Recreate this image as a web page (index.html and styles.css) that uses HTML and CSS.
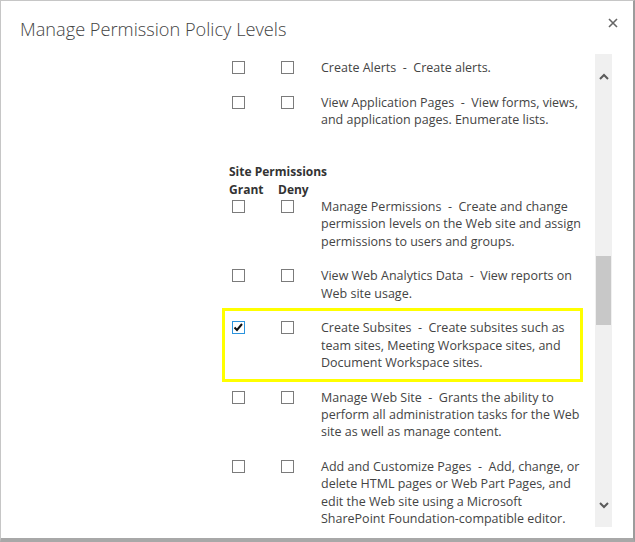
FILE: index.html
```
<!DOCTYPE html>
<html>
<head>
<meta charset="utf-8">
<link rel="stylesheet" href="styles.css">
</head>
<body>
<div class="dialog">
  <div class="header">
    <div class="title">Manage Permission Policy Levels</div>
    <button class="close" aria-label="Close">
      <svg width="10" height="10" viewBox="0 0 10 10"><path d="M1 1 L9 9 M9 1 L1 9" stroke="#666" stroke-width="1.6" fill="none"/></svg>
    </button>
  </div>
  <div class="body">
    <div class="content">
      <div class="row">
        <span class="cell"><span class="cb"></span></span>
        <span class="cell"><span class="cb"></span></span>
        <span class="desc">Create Alerts&nbsp; -&nbsp; Create alerts.</span>
      </div>
      <div class="row">
        <span class="cell"><span class="cb"></span></span>
        <span class="cell"><span class="cb"></span></span>
        <span class="desc">View Application Pages&nbsp; -&nbsp; View forms, views,<br>and application pages. Enumerate lists.</span>
      </div>
      <div class="section-head">
        <div class="section-title">Site Permissions</div>
        <div class="col-heads"><span class="cell">Grant</span><span class="cell">Deny</span></div>
      </div>
      <div class="row">
        <span class="cell"><span class="cb"></span></span>
        <span class="cell"><span class="cb"></span></span>
        <span class="desc">Manage Permissions&nbsp; -&nbsp; Create and change<br>permission levels on the Web site and assign<br>permissions to users and groups.</span>
      </div>
      <div class="row">
        <span class="cell"><span class="cb"></span></span>
        <span class="cell"><span class="cb"></span></span>
        <span class="desc">View Web Analytics Data&nbsp; -&nbsp; View reports on<br>Web site usage.</span>
      </div>
      <div class="row highlight">
        <span class="cell"><span class="cb checked"><svg width="13" height="13" viewBox="0 0 13 13"><path d="M2.5 6.5 L5 9 L10 3" stroke="#111" stroke-width="2" fill="none"/></svg></span></span>
        <span class="cell"><span class="cb"></span></span>
        <span class="desc">Create Subsites&nbsp; -&nbsp; Create subsites such as<br>team sites, Meeting Workspace sites, and<br>Document Workspace sites.</span>
      </div>
      <div class="row">
        <span class="cell"><span class="cb"></span></span>
        <span class="cell"><span class="cb"></span></span>
        <span class="desc">Manage Web Site&nbsp; -&nbsp; Grants the ability to<br>perform all administration tasks for the Web<br>site as well as manage content.</span>
      </div>
      <div class="row">
        <span class="cell"><span class="cb"></span></span>
        <span class="cell"><span class="cb"></span></span>
        <span class="desc">Add and Customize Pages&nbsp; -&nbsp; Add, change, or<br>delete HTML pages or Web Part Pages, and<br>edit the Web site using a Microsoft<br>SharePoint Foundation-compatible editor.</span>
      </div>
    </div>
    <div class="scrollbar">
      <div class="arrow">
        <svg width="10" height="7" viewBox="0 0 10 7"><path d="M1 6 L5 2 L9 6" stroke="#5a5a5a" stroke-width="2" fill="none"/></svg>
      </div>
      <div class="track">
        <div class="thumb"></div>
      </div>
      <div class="arrow">
        <svg width="10" height="7" viewBox="0 0 10 7"><path d="M1 1 L5 5 L9 1" stroke="#5a5a5a" stroke-width="2" fill="none"/></svg>
      </div>
    </div>
  </div>
</div>
</body>
</html>
```
FILE: styles.css
```
html, body {
  margin: 0;
  padding: 0;
  background: #ffffff;
}
body {
  font-family: "Open Sans", "Noto Sans", "Liberation Sans", sans-serif;
  color: #444444;
}
.dialog {
  width: 635px;
  height: 542px;
  box-sizing: border-box;
  border-top: 1px solid #c6c6c6;
  border-left: 1px solid #c6c6c6;
  border-right: 2px solid #9c9c9c;
  border-bottom: 4px solid #a8a8a8;
  background: #ffffff;
  display: flex;
  flex-direction: column;
}
.header {
  height: 53px;
  display: flex;
  align-items: flex-start;
  justify-content: space-between;
}
.title {
  margin: 15px 0 0 19px;
  font-size: 18.2px;
  font-weight: 300;
  color: #444444;
  line-height: 26px;
}
.close {
  margin: 16px 14px 0 0;
  padding: 0;
  width: 12px;
  height: 12px;
  border: none;
  background: transparent;
  display: flex;
  align-items: center;
  justify-content: center;
}
.body {
  height: 473px;
  display: flex;
}
.content {
  width: 594px;
  height: 473px;
  overflow: hidden;
  box-sizing: border-box;
  padding: 5.3px 0 0 228px;
  font-size: 12.5px;
  line-height: 17.33px;
}
.row {
  width: 354px;
  display: grid;
  grid-template-columns: 49px 43px 1fr;
  margin-bottom: 17.33px;
}
.cell {
  display: block;
}
.cb {
  display: block;
  width: 13px;
  height: 13px;
  box-sizing: border-box;
  border: 1px solid #7b7b7b;
  margin: 2px 0 0 3px;
  background: #fff;
  position: relative;
}
.cb.checked {
  border-color: #2b93dd;
}
.cb.checked svg {
  position: absolute;
  left: -1px;
  top: -1px;
}
.desc {
  white-space: nowrap;
  color: #444444;
}
.highlight {
  position: relative;
}
.highlight::after {
  content: "";
  position: absolute;
  left: -7px;
  top: -11.3px;
  right: 0;
  bottom: -10.7px;
  border: 3px solid #ffff00;
  pointer-events: none;
}
.section-head {
  padding-top: 17.33px;
  font-size: 12px;
  font-weight: 700;
  color: #333333;
}
.col-heads {
  display: grid;
  grid-template-columns: 49px 43px;
}
.scrollbar {
  width: 17px;
  height: 473px;
  background: #f0f0f0;
  display: flex;
  flex-direction: column;
}
.arrow {
  height: 44px;
  display: flex;
  align-items: center;
  justify-content: center;
}
.track {
  flex: 1;
  padding-top: 158px;
}
.thumb {
  width: 15px;
  height: 69px;
  margin-left: 1px;
  background: #c8c8c8;
}
```
